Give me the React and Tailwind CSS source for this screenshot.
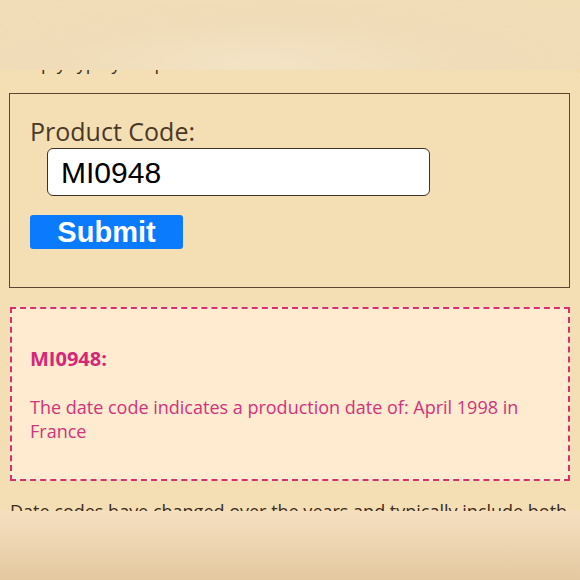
export default function App() {
  return (
    <div className="relative w-[580px] h-[580px] overflow-hidden bg-[#f4dfb5]" style={{ fontFamily: "'Open Sans', 'Noto Sans', sans-serif" }}>
      <div className="pt-[50px] pl-[10px] text-[18px] leading-[26px] text-[#3a2c1e] whitespace-nowrap">
        Simply type your product code into the box below and hit submit to get
      </div>

      <div className="ml-[9px] mt-[17px] w-[561px] border-[1.5px] border-[#5b4631] pl-[20px] pt-[20px] pb-[38px]">
        <div className="text-[25px] leading-[34px] text-[#4a3826]">Product Code:</div>
        <div className="ml-[17px] mt-0 w-[383px] h-[48px] bg-white border-[1.5px] border-[#3f3225] rounded-[6px] flex items-center pl-[13px]">
          <span className="text-[30px] font-medium text-black" style={{ fontFamily: "'Liberation Sans', Arial, sans-serif" }}>MI0948</span>
        </div>
        <button className="mt-[19px] w-[153px] h-[34px] bg-[#0b7bfd] rounded-[3px] flex items-center justify-center text-white text-[29px] font-bold leading-none" style={{ fontFamily: "'Liberation Sans', Arial, sans-serif" }}>
          Submit
        </button>
      </div>

      <div className="ml-[10px] mt-[19px] w-[560px] h-[174px] border-2 border-dashed border-[#d8306f] bg-[#feebd0] px-[18px] pt-[36px]">
        <div className="text-[20px] font-bold leading-[28px] text-[#d42776]">MI0948:</div>
        <p className="mt-[22px] text-[18px] leading-[24px] text-[#d0337b] pr-[10px]">
          The date code indicates a production date of: April 1998 in France
        </p>
      </div>

      <div className="mt-[17px] pl-[10px] text-[18px] leading-[26px] text-[#3a2c1e] whitespace-nowrap">
        Date codes have changed over the years and typically include both
      </div>

      <div className="absolute left-0 top-0 z-10 w-full h-[70px] bg-[#f0dcb6] bg-[radial-gradient(ellipse_at_45%_90%,#f3e3c5_0%,#f0dcb8_45%,#f1ddb6_100%)]"></div>
      <div className="absolute left-0 bottom-0 z-10 w-full h-[69px] bg-[linear-gradient(to_bottom,#f5dfc0_0%,#efd7b4_40%,#e3c8a0_100%)]"></div>
    </div>
  );
}
